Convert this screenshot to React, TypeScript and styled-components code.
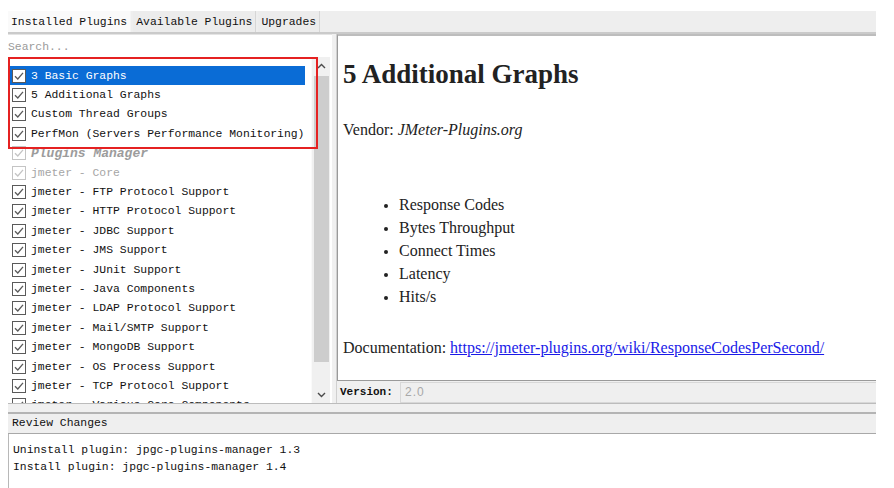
import styled, { createGlobalStyle } from 'styled-components'

// 목록 데이터
type Plugin = {
    name: string
    state?: 'selected' | 'locked' | 'managed'
}

const plugins: Plugin[] = [
    { name: '3 Basic Graphs', state: 'selected' },
    { name: '5 Additional Graphs' },
    { name: 'Custom Thread Groups' },
    { name: 'PerfMon (Servers Performance Monitoring)' },
    { name: 'Plugins Manager', state: 'managed' },
    { name: 'jmeter - Core', state: 'locked' },
    { name: 'jmeter - FTP Protocol Support' },
    { name: 'jmeter - HTTP Protocol Support' },
    { name: 'jmeter - JDBC Support' },
    { name: 'jmeter - JMS Support' },
    { name: 'jmeter - JUnit Support' },
    { name: 'jmeter - Java Components' },
    { name: 'jmeter - LDAP Protocol Support' },
    { name: 'jmeter - Mail/SMTP Support' },
    { name: 'jmeter - MongoDB Support' },
    { name: 'jmeter - OS Process Support' },
    { name: 'jmeter - TCP Protocol Support' },
    { name: 'jmeter - Various Core Components' },
]

const features = ['Response Codes', 'Bytes Throughput', 'Connect Times', 'Latency', 'Hits/s']

function CheckBox({ faded }: { faded?: boolean }) {
    const c = faded ? '#c4c4c4' : '#5a5a5a'
    return (
        <svg width="14" height="14" viewBox="0 0 14 14">
            <rect x="0.5" y="0.5" width="13" height="13" fill="#fff" stroke={c} />
            <path d="M3 7.2 L5.8 10 L11 3.8" fill="none" stroke={c} strokeWidth="1.3" />
        </svg>
    )
}

// 스크롤 화살표
function Chevron({ up }: { up?: boolean }) {
    return (
        <svg width="9" height="6" viewBox="0 0 9 6">
            <path d={up ? 'M1 5 L4.5 1.5 L8 5' : 'M1 1 L4.5 4.5 L8 1'} fill="none" stroke="#4a4a4a" strokeWidth="1.4" />
        </svg>
    )
}

function App() {
    return (
        <>
            <GlobalStyle />
            <Window>
                <TabBar>
                    <Tab $active>Installed Plugins</Tab>
                    <Tab>Available Plugins</Tab>
                    <Tab>Upgrades</Tab>
                </TabBar>
                <TopSplit>
                    <LeftPane>
                        <Search>Search...</Search>
                        <ListWrap>
                            <List>
                                {plugins.map((p) => (
                                    <Row key={p.name} $state={p.state}>
                                        <CheckBox faded={p.state === 'locked' || p.state === 'managed'} />
                                        <span>{p.name}</span>
                                    </Row>
                                ))}
                            </List>
                            <ScrollBar>
                                <Arrow>
                                    <Chevron up />
                                </Arrow>
                                <Thumb />
                                <Arrow>
                                    <Chevron />
                                </Arrow>
                            </ScrollBar>
                            <RedMark />
                        </ListWrap>
                    </LeftPane>
                    <RightPane>
                        <Doc>
                            <h1>5 Additional Graphs</h1>
                            <p>
                                Vendor: <i>JMeter-Plugins.org</i>
                            </p>
                            <ul>
                                {features.map((f) => (
                                    <li key={f}>{f}</li>
                                ))}
                            </ul>
                            <p>
                                Documentation:{' '}
                                <a href="#doc">https://jmeter-plugins.org/wiki/ResponseCodesPerSecond/</a>
                            </p>
                        </Doc>
                        <VersionRow>
                            <label>Version:</label>
                            <VersionField>2.0</VersionField>
                        </VersionRow>
                    </RightPane>
                </TopSplit>
                <Splitter />
                <ReviewHeader>Review Changes</ReviewHeader>
                <ReviewText>
                    <div>Uninstall plugin: jpgc-plugins-manager 1.3</div>
                    <div>Install plugin: jpgc-plugins-manager 1.4</div>
                </ReviewText>
            </Window>
        </>
    )
}

const GlobalStyle = createGlobalStyle`
    body {
        margin: 0;
        background: #fff;
        font-family: "Liberation Mono", monospace;
    }
`

const Window = styled.div`
    margin: 11px 0 0 8px;
    width: 868px;
    background: #f0f0f0;
    font-size: 11.4px;
    color: #111;
`

const TabBar = styled.div`
    display: flex;
    height: 21px;
    border-bottom: 2px solid #cacaca;
    background: #eeeeee;
`

const Tab = styled.div<{ $active?: boolean }>`
    display: flex;
    align-items: center;
    padding: 0 3px;
    margin-right: 2px;
    background: ${(p) => (p.$active ? '#fafafa' : '#ececec')};
    border-right: 1px solid ${(p) => (p.$active ? '#f4f4f4' : '#d6d6d6')};
`

const TopSplit = styled.div`
    display: flex;
    height: 369px;
`

const LeftPane = styled.div`
    width: 324px;
    display: flex;
    flex-direction: column;
    background: #fff;
`

const Search = styled.div`
    height: 22px;
    line-height: 24px;
    color: #9a9a9a;
    border-top: 1px solid #e4e4e4;
`

const ListWrap = styled.div`
    position: relative;
    flex: 1;
    display: flex;
    overflow: hidden;
`

const List = styled.div`
    flex: 1;
    padding: 9px 0 0 2px;
    overflow: hidden;
`

const Row = styled.div<{ $state?: Plugin['state'] }>`
    display: flex;
    align-items: center;
    gap: 5px;
    height: 19.4px;
    width: 293px;
    padding-left: 2px;
    white-space: nowrap;
    background: ${(p) => (p.$state === 'selected' ? '#0a6cd6' : 'transparent')};
    color: ${(p) =>
        p.$state === 'selected' ? '#fff' : p.$state === 'locked' ? '#a6a6a6' : p.$state === 'managed' ? '#9c9c9c' : '#111'};
    font-style: ${(p) => (p.$state === 'managed' ? 'italic' : 'normal')};
    font-weight: ${(p) => (p.$state === 'managed' ? 'bold' : 'normal')};
    font-size: ${(p) => (p.$state === 'managed' ? '13px' : 'inherit')};

    svg {
        flex: none;
    }
`

const ScrollBar = styled.div`
    width: 18px;
    display: flex;
    flex-direction: column;
    align-items: center;
    background: #f0f0f0;
    margin-right: 2px;
    border-left: 1px solid #fafafa;
`

const Arrow = styled.div`
    height: 17px;
    display: flex;
    align-items: center;
    justify-content: center;
`

const Thumb = styled.div`
    flex: 1;
    width: 15px;
    margin: 2px 0 24px;
    background: #cdcdcd;
`

// 주석 표시용 빨간 테두리
const RedMark = styled.div`
    position: absolute;
    left: 0;
    top: 0;
    width: 306px;
    height: 88px;
    border: 2px solid #e52121;
`

const RightPane = styled.div`
    flex: 1;
    display: flex;
    flex-direction: column;
    margin-left: 4px;
    border-left: 1px solid #d0d0d0;
`

const Doc = styled.div`
    flex: 1;
    background: #fff;
    border: 1px solid #9a9a9a;
    border-right: none;
    border-top: 2px solid #bdbdbd;
    padding: 0 0 0 5px;
    font-family: "Liberation Serif", serif;
    font-size: 16px;
    color: #222;
    overflow: hidden;

    h1 {
        font-size: 27px;
        margin: 22px 0 0;
        line-height: 32px;
    }
    p {
        margin: 31px 0 0;
    }
    ul {
        margin: 54px 0 0;
        padding-left: 56px;
        line-height: 23px;
        list-style: disc;
    }
    li {
        padding-left: 0;
    }
    li::marker {
        font-size: 15px;
    }
    ul + p {
        margin-top: 31px;
    }
    a {
        color: #1a1ae8;
        text-decoration: underline;
    }
`

const VersionRow = styled.div`
    display: flex;
    align-items: center;
    height: 22px;
    gap: 4px;
    padding-left: 3px;

    label {
        font-weight: bold;
        width: 56px;
        font-size: 11px;
    }
`

const VersionField = styled.div`
    flex: 1;
    height: 19px;
    line-height: 19px;
    border: 1px solid #d8d8d8;
    border-right: none;
    background: #efefef;
    color: #a8a8a8;
    padding-left: 4px;
    font-family: "Liberation Sans", sans-serif;
    font-size: 12px;
    letter-spacing: 1px;
`

const Splitter = styled.div`
    height: 8px;
    border-top: 1px solid #bcbcbc;
    border-bottom: 2px solid #b4b4b4;
`

const ReviewHeader = styled.div`
    height: 19px;
    line-height: 19px;
    padding-left: 4px;
    border-bottom: 1px solid #a8a8a8;
    background: #efefef;
`

const ReviewText = styled.div`
    height: 53px;
    background: #fff;
    border-left: 1px solid #b8b8b8;
    padding: 8px 0 0 4px;
    line-height: 17px;
`

export default App
